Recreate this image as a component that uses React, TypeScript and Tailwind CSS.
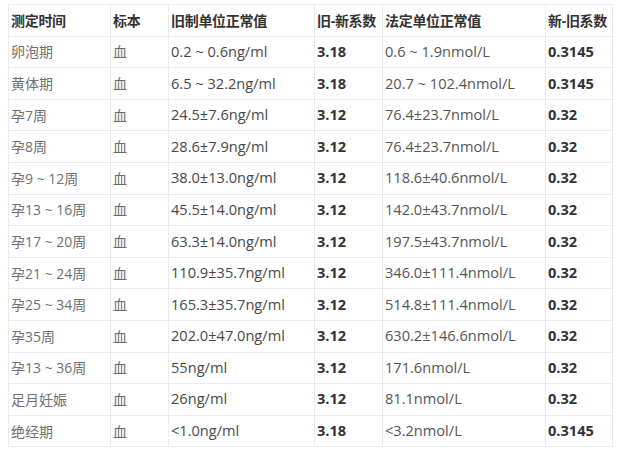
const rows: [string, string, string, string, string, string][] = [
  ["卵泡期", "血", "0.2 ~ 0.6ng/ml", "3.18", "0.6 ~ 1.9nmol/L", "0.3145"],
  ["黄体期", "血", "6.5 ~ 32.2ng/ml", "3.18", "20.7 ~ 102.4nmol/L", "0.3145"],
  ["孕7周", "血", "24.5±7.6ng/ml", "3.12", "76.4±23.7nmol/L", "0.32"],
  ["孕8周", "血", "28.6±7.9ng/ml", "3.12", "76.4±23.7nmol/L", "0.32"],
  ["孕9 ~ 12周", "血", "38.0±13.0ng/ml", "3.12", "118.6±40.6nmol/L", "0.32"],
  ["孕13 ~ 16周", "血", "45.5±14.0ng/ml", "3.12", "142.0±43.7nmol/L", "0.32"],
  ["孕17 ~ 20周", "血", "63.3±14.0ng/ml", "3.12", "197.5±43.7nmol/L", "0.32"],
  ["孕21 ~ 24周", "血", "110.9±35.7ng/ml", "3.12", "346.0±111.4nmol/L", "0.32"],
  ["孕25 ~ 34周", "血", "165.3±35.7ng/ml", "3.12", "514.8±111.4nmol/L", "0.32"],
  ["孕35周", "血", "202.0±47.0ng/ml", "3.12", "630.2±146.6nmol/L", "0.32"],
  ["孕13 ~ 36周", "血", "55ng/ml", "3.12", "171.6nmol/L", "0.32"],
  ["足月妊娠", "血", "26ng/ml", "3.12", "81.1nmol/L", "0.32"],
  ["绝经期", "血", "<1.0ng/ml", "3.18", "<3.2nmol/L", "0.3145"],
];

const headers = ["测定时间", "标本", "旧制单位正常值", "旧-新系数", "法定单位正常值", "新-旧系数"];

// per column text colour / weight
const cellStyle = [
  "text-[14px] text-[#707070]",
  "text-[14px] text-[#6b6b6b]",
  "text-[14.6px] text-[#484848]",
  "text-[14.6px] font-bold text-[#333]",
  "text-[14.6px] text-[#555]",
  "text-[14.6px] font-bold text-[#333]",
];

export default function App() {
  return (
    <div
      className="w-[620px] h-[455px] bg-white pt-[4px] pl-[8px]"
      style={{ fontFamily: '"Open Sans", "Noto Sans CJK SC", sans-serif' }}
    >
      <div className="grid w-[605px] grid-cols-[101px_57px_145px_67px_162px_66px] grid-rows-[repeat(14,30.6px)] gap-px bg-[#ebebeb] p-px">
        {headers.map((h) => (
          <div key={h} className="flex items-center bg-white pl-[2px] text-[14px] font-bold text-[#333] tracking-[-0.3px] whitespace-nowrap">
            {h}
          </div>
        ))}
        {rows.map((r, i) =>
          r.map((c, j) => (
            <div
              key={`${i}-${j}`}
              className={`flex items-center bg-white pl-[2px] whitespace-nowrap ${cellStyle[j]}`}
            >
              {c}
            </div>
          ))
        )}
      </div>
    </div>
  );
}
